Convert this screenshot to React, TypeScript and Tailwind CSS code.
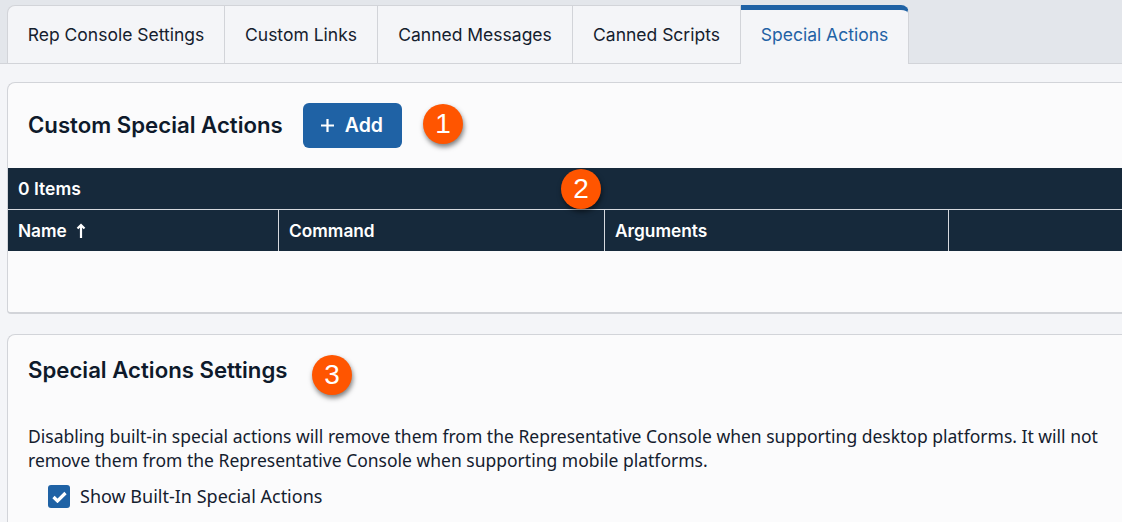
const inter = "font-['Inter',sans-serif]";

const tabs = [
  { label: "Rep Console Settings", width: "w-[218px] rounded-tl-lg border-l" },
  { label: "Custom Links", width: "w-[153px]" },
  { label: "Canned Messages", width: "w-[195px]" },
  { label: "Canned Scripts", width: "w-[168px]" },
];

function Badge({ n, className }: { n: number; className: string }) {
  return (
    <div className={`absolute flex h-10 w-10 items-center justify-center rounded-full bg-[#ff5500] text-[28px] leading-none text-white shadow-[1px_3px_5px_rgba(0,0,0,0.5)] font-['Liberation_Sans',sans-serif] ${className}`}>
      {n}
    </div>
  );
}

export default function App() {
  return (
    <div className="relative h-[522px] w-[1122px] overflow-hidden bg-[#f4f5f8]">
      <div className="flex h-16 border-b border-[#d2d4d9] bg-[#e3e6eb] pl-[7px] pt-[5px]">
        {tabs.map((t) => (
          <div
            key={t.label}
            className={`flex h-[58px] items-center justify-center border-r border-t border-[#d2d4d9] bg-[#f4f5f8] pt-[2px] text-[17.5px] text-[#14202e] ${inter} ${t.width}`}
          >
            {t.label}
          </div>
        ))}
        <div className={`-mb-px flex h-[59px] w-[168px] items-center justify-center rounded-tr-lg border-r border-t-[5px] border-r-[#d2d4d9] border-t-[#1f62a5] bg-[#f4f5f8] pb-[3px] text-[17.5px] text-[#1f62a5] ${inter}`}>
          Special Actions
        </div>
      </div>

      <div className="ml-[7px] mt-[18px] h-[232px] rounded-tl-lg rounded-bl-sm border-b-2 border-l border-t border-[#d2d4d9] bg-[#fbfbfc]">
        <div className="flex h-[85px] items-center pl-5 pb-[1px]">
          <h2 className={`text-[22.2px] font-semibold text-[#0e1a2b] ${inter}`}>Custom Special Actions</h2>
          <button className={`ml-5 flex h-[45px] w-[99px] items-center gap-[10px] rounded-md bg-[#1f62a5] pl-[17px] pt-[1px] text-[19.5px] font-semibold text-white ${inter}`}>
            <svg width="15" height="15" viewBox="0 0 15 15" fill="none" stroke="currentColor" strokeWidth="2.2">
              <path d="M7.5 1v13M1 7.5h13" />
            </svg>
            Add
          </button>
        </div>
        <div className={`bg-[#16293b] text-white ${inter}`}>
          <div className="flex h-[42px] items-center border-b border-[#d6d9de] pl-2.5 pt-[1px] text-[17.5px] font-semibold">0 Items</div>
          <div className="grid h-[41px] grid-cols-[271px_326px_344px_1fr] text-[17.3px] font-semibold">
            <div className="flex items-center gap-[9px] border-r border-[#d6d9de] pl-2.5">
              Name
              <svg width="10" height="16" viewBox="0 0 10 16" fill="none" stroke="currentColor" strokeWidth="2.2">
                <path d="M5 15V2M1.5 5.5 5 2l3.5 3.5" />
              </svg>
            </div>
            <div className="flex items-center border-r border-[#d6d9de] pl-2.5">Command</div>
            <div className="flex items-center border-r border-[#d6d9de] pl-2.5">Arguments</div>
            <div />
          </div>
        </div>
      </div>

      <div className="ml-[7px] mt-5 h-[200px] rounded-tl-lg border-l border-t border-[#d2d4d9] bg-[#fbfbfc] pl-5">
        <h2 className={`pt-[20px] text-[22.2px] font-semibold leading-[30px] text-[#0e1a2b] ${inter}`}>Special Actions Settings</h2>
        <p className="mt-[39px] text-[17.5px] leading-6 text-[#14202e] font-['Noto_Sans',sans-serif]">
          Disabling built-in special actions will remove them from the Representative Console when supporting desktop platforms. It will not remove them from the Representative Console when supporting mobile platforms.
        </p>
        <div className="ml-5 mt-[11px] flex items-center gap-[10px] text-[18px] text-[#14202e] font-['Noto_Sans',sans-serif]">
          <div className="flex h-[23px] w-[22px] items-center justify-center rounded-[3px] bg-[#1f62a5]">
            <svg width="15" height="12" viewBox="0 0 15 12" fill="none" stroke="#fff" strokeWidth="3.2">
              <path d="M1.5 6 5.5 10 13.5 2" />
            </svg>
          </div>
          Show Built-In Special Actions
        </div>
      </div>

      <Badge n={1} className="left-[423px] top-[104px]" />
      <Badge n={2} className="left-[561px] top-[169px]" />
      <Badge n={3} className="left-[312px] top-[355px]" />
    </div>
  );
}
